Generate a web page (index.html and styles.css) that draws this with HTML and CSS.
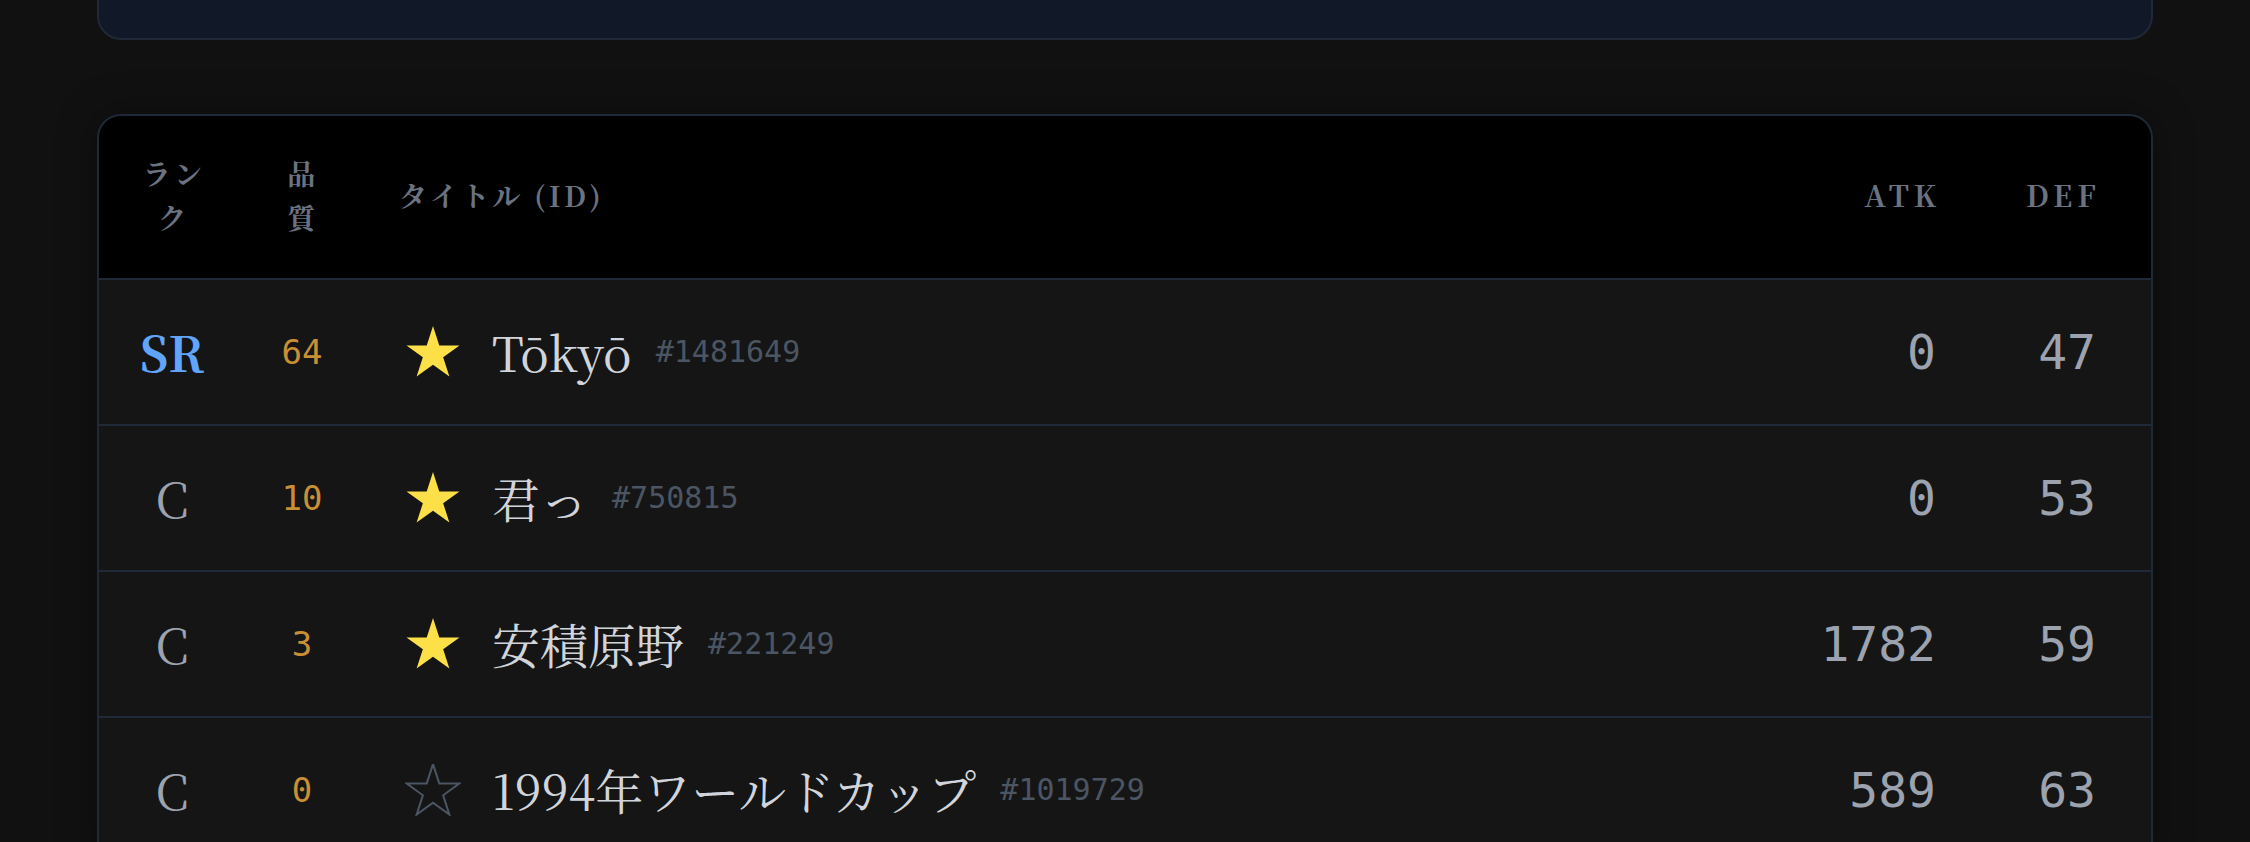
FILE: index.html
```html
<!DOCTYPE html>
<html lang="ja">
<head>
<meta charset="utf-8">
<title>ランキング</title>
<link rel="stylesheet" href="styles.css">
</head>
<body>
<div class="page">
  <div class="top-panel"></div>

  <div class="card">
    <table class="ranking">
      <colgroup>
        <col class="c-rank">
        <col class="c-quality">
        <col class="c-title">
        <col class="c-atk">
        <col class="c-def">
      </colgroup>
      <thead>
        <tr>
          <th class="h-rank">ランク</th>
          <th class="h-quality">品質</th>
          <th class="h-title">タイトル (ID)</th>
          <th class="h-num">ATK</th>
          <th class="h-num">DEF</th>
        </tr>
      </thead>
      <tbody>
        <tr>
          <td class="rank rank-sr">SR</td>
          <td class="quality">64</td>
          <td class="title-cell">
            <div class="title-wrap">
              <svg class="star star-on" viewBox="0 0 56 52" width="56" height="52"><polygon points="28,0.1 34.27,19.38 54.53,19.38 38.14,31.29 44.4,50.57 28,38.66 11.6,50.57 17.86,31.29 1.47,19.38 21.73,19.38"/></svg>
              <span class="title">Tōkyō</span>
              <span class="id">#1481649</span>
            </div>
          </td>
          <td class="num">0</td>
          <td class="num">47</td>
        </tr>
        <tr>
          <td class="rank">C</td>
          <td class="quality">10</td>
          <td class="title-cell">
            <div class="title-wrap">
              <svg class="star star-on" viewBox="0 0 56 52" width="56" height="52"><polygon points="28,0.1 34.27,19.38 54.53,19.38 38.14,31.29 44.4,50.57 28,38.66 11.6,50.57 17.86,31.29 1.47,19.38 21.73,19.38"/></svg>
              <span class="title">君っ</span>
              <span class="id">#750815</span>
            </div>
          </td>
          <td class="num">0</td>
          <td class="num">53</td>
        </tr>
        <tr>
          <td class="rank">C</td>
          <td class="quality">3</td>
          <td class="title-cell">
            <div class="title-wrap">
              <svg class="star star-on" viewBox="0 0 56 52" width="56" height="52"><polygon points="28,0.1 34.27,19.38 54.53,19.38 38.14,31.29 44.4,50.57 28,38.66 11.6,50.57 17.86,31.29 1.47,19.38 21.73,19.38"/></svg>
              <span class="title">安積原野</span>
              <span class="id">#221249</span>
            </div>
          </td>
          <td class="num">1782</td>
          <td class="num">59</td>
        </tr>
        <tr>
          <td class="rank">C</td>
          <td class="quality">0</td>
          <td class="title-cell">
            <div class="title-wrap">
              <svg class="star star-off" viewBox="0 0 56 52" width="56" height="52"><polygon points="28,0.1 34.27,19.38 54.53,19.38 38.14,31.29 44.4,50.57 28,38.66 11.6,50.57 17.86,31.29 1.47,19.38 21.73,19.38"/></svg>
              <span class="title">1994年ワールドカップ</span>
              <span class="id">#1019729</span>
            </div>
          </td>
          <td class="num">589</td>
          <td class="num">63</td>
        </tr>
      </tbody>
    </table>
  </div>
</div>
</body>
</html>
```

FILE: styles.css
```css
html, body {
  margin: 0;
  padding: 0;
  background: #111111;
}

body {
  font-family: "Noto Serif CJK JP", "Liberation Serif", serif;
  overflow: hidden;
}

.page {
  padding: 0 97px;
}

.top-panel {
  height: 38px;
  background: #111827;
  border: 2px solid #1f2937;
  border-top: none;
  border-radius: 0 0 24px 24px;
}

.card {
  margin-top: 74px;
  border: 2px solid #1f2937;
  border-radius: 24px;
  overflow: hidden;
  background: #151515;
  box-shadow: 0 0 40px rgba(0, 0, 0, 0.35);
}

.ranking {
  width: 100%;
  border-collapse: collapse;
  table-layout: fixed;
}

.c-rank { width: 146px; }
.c-quality { width: 114px; }
.c-atk { width: 220px; }
.c-def { width: 160px; }

thead tr {
  background: #000000;
  border-bottom: 2px solid #1f2937;
}

th {
  font-weight: 700;
  font-size: 28px;
  line-height: 44px;
  letter-spacing: 0.12em;
  color: #6b7280;
  padding: 35px 0 39px;
  vertical-align: middle;
}

.h-rank {
  padding-left: 38px;
  padding-right: 34px;
  text-align: center;
}

.h-quality {
  padding-left: 36px;
  padding-right: 34px;
  text-align: center;
}

.h-title {
  text-align: left;
  padding-left: 40px;
}

.h-num {
  text-align: right;
  padding-right: 50px;
  font-size: 29px;
  letter-spacing: 0.17em;
}

tbody tr {
  border-bottom: 2px solid #1f2937;
  background: #151515;
}

td {
  padding: 36px 0;
  line-height: 72px;
  vertical-align: middle;
}

.rank {
  text-align: center;
  font-size: 48px;
  color: #9ca3af;
}

.rank-sr {
  color: #60a5fa;
  font-weight: 700;
}

.quality {
  text-align: center;
  font-family: "DejaVu Sans Mono", monospace;
  font-size: 34px;
  color: #c98f35;
}

.title-cell {
  padding-left: 46px;
}

.title-wrap {
  display: flex;
  align-items: center;
}

.star {
  flex: none;
  margin-right: 31px;
}

.star-on polygon {
  fill: #fde047;
}

.star-off polygon {
  fill: none;
  stroke: #4b5563;
  stroke-width: 2;
  stroke-linejoin: miter;
}

.title {
  font-size: 48px;
  color: #d1d5db;
  white-space: nowrap;
}

.id {
  margin-left: 24px;
  font-family: "DejaVu Sans Mono", monospace;
  font-size: 30px;
  color: #4b5563;
}

.num {
  text-align: right;
  padding-right: 55px;
  font-family: "DejaVu Sans Mono", monospace;
  font-size: 48px;
  color: #9ca3af;
}
```
